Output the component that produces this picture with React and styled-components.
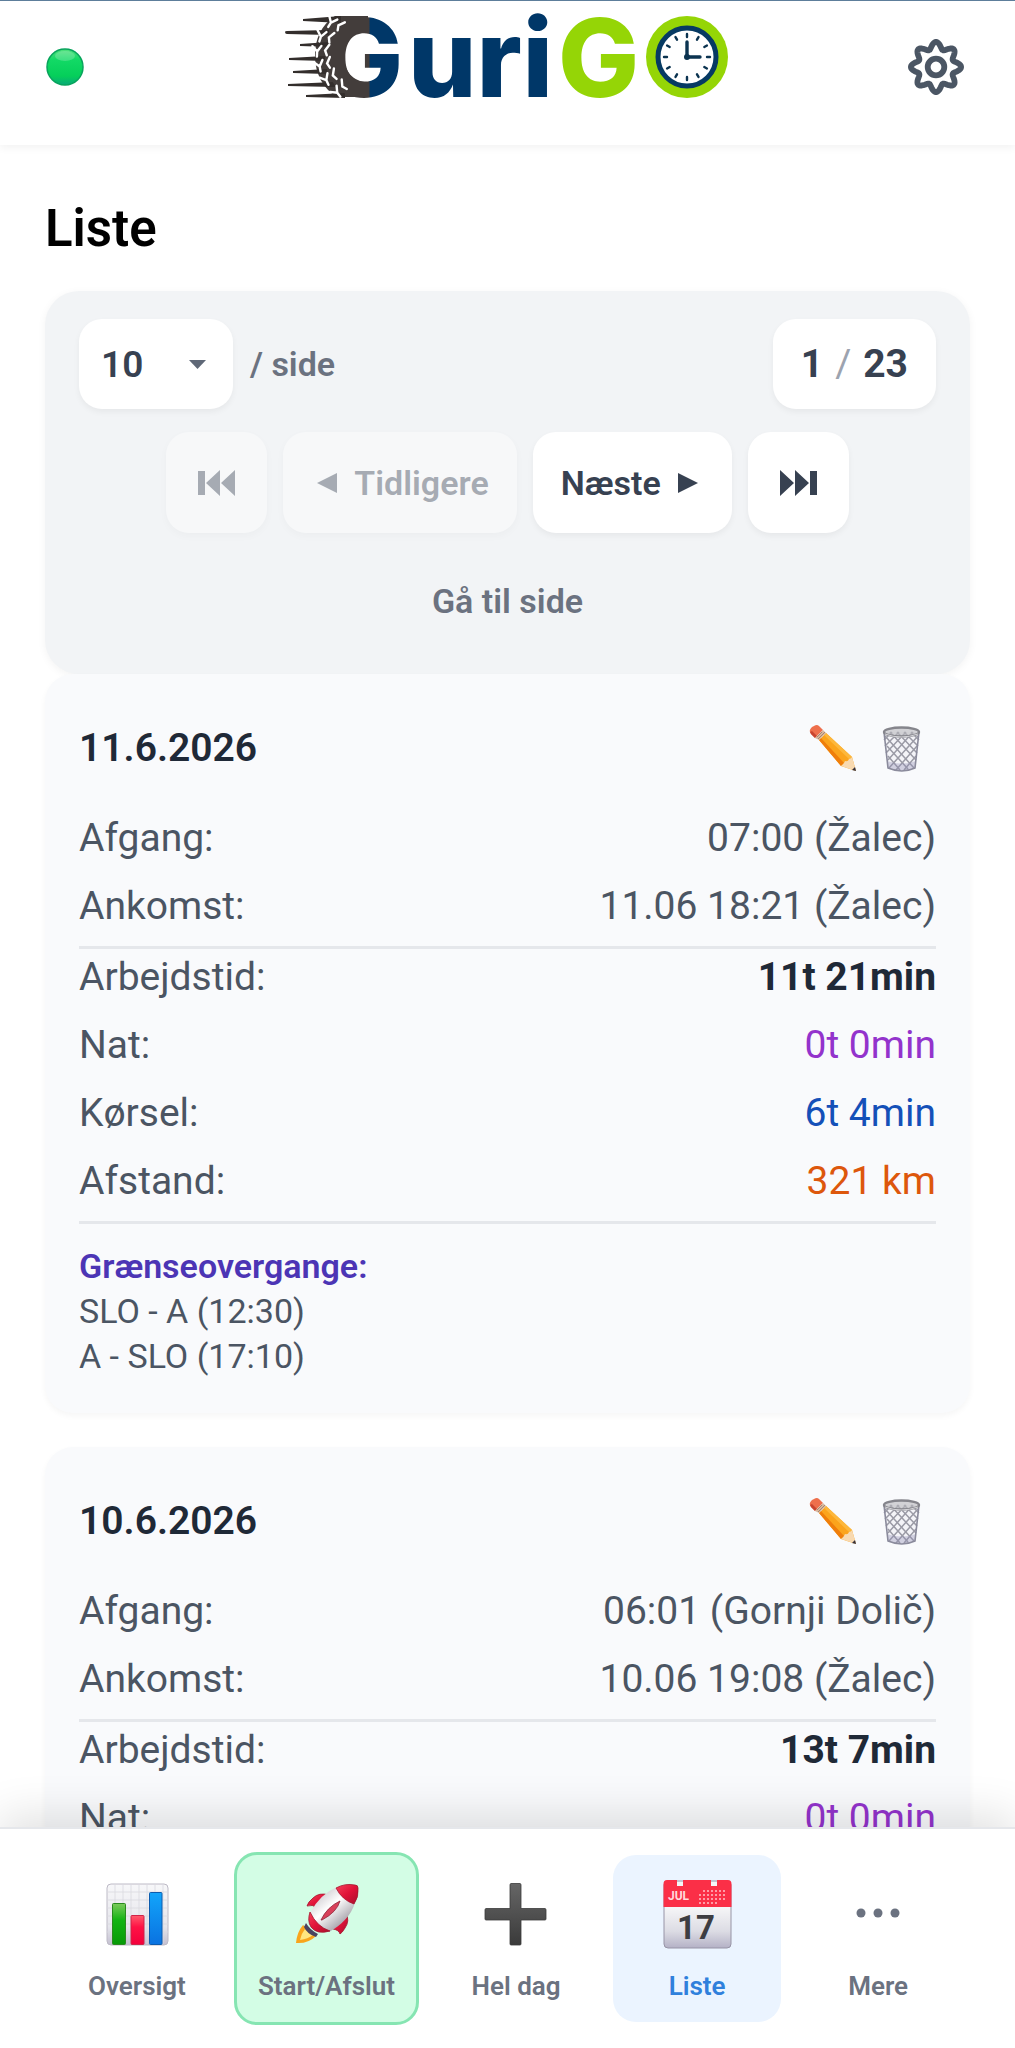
import React, { useState } from 'react';
import styled, { createGlobalStyle, css } from 'styled-components';

const GlobalStyle = createGlobalStyle`
  *, *::before, *::after {
    box-sizing: border-box;
  }

  body {
    margin: 0;
    background: #ffffff;
    font-family: Roboto, 'Liberation Sans', sans-serif;
  }

  button, select {
    font-family: inherit;
    border: none;
    margin: 0;
    padding: 0;
    background: none;
  }
`;

const Screen = styled.div`
  display: flex;
  flex-direction: column;
  height: 100vh;
  overflow: hidden;
  border-top: 1px solid #5d7e9b;
`;

const Header = styled.header`
  position: relative;
  z-index: 1;
  flex: none;
  display: grid;
  grid-template-columns: 1fr auto 1fr;
  align-items: center;
  padding: 12px 45px 34px;
  background: #ffffff;
  box-shadow: 0 3px 8px rgba(0, 0, 0, 0.05);
`;

const HeaderSide = styled.div`
  display: flex;
  align-items: center;
  justify-content: ${({ $end }) => ($end ? 'flex-end' : 'flex-start')};
  padding-top: 10px;
`;

const LogoSvg = styled.svg`
  display: block;
  overflow: visible;
`;

const IconButton = styled.button`
  display: flex;
  align-items: center;
  justify-content: center;
  width: ${({ $width }) => $width}px;
  height: ${({ $height }) => $height}px;
  cursor: pointer;
`;

const Main = styled.main`
  flex: 1;
  min-height: 0;
  overflow-y: auto;
  scrollbar-width: none;
  padding: 50px 45px 0;
`;

const Title = styled.h1`
  margin: 0 0 28px;
  font-size: 51px;
  line-height: 68px;
  font-weight: 600;
  color: #000000;
`;

const Pager = styled.section`
  display: flex;
  flex-direction: column;
  gap: 23px;
  padding: 28px 34px;
  border-radius: 34px;
  background: #f2f4f6;
  box-shadow: 0 2px 8px rgba(0, 0, 0, 0.05);
`;

const PagerTop = styled.div`
  display: flex;
  align-items: center;
  justify-content: space-between;
`;

const PageSize = styled.label`
  display: flex;
  align-items: center;
  gap: 17px;
  font-size: 34px;
  font-weight: 600;
  color: #6b7280;
`;

const whiteBox = css`
  border-radius: 23px;
  background: #ffffff;
  box-shadow: 0 3px 6px rgba(0, 0, 0, 0.05);
`;

const SelectBox = styled.span`
  display: grid;
  align-items: center;
  width: 154px;
  height: 90px;
  ${whiteBox}

  > * {
    grid-area: 1 / 1;
  }

  svg {
    justify-self: end;
    margin-right: 27px;
    pointer-events: none;
  }
`;

const Select = styled.select`
  appearance: none;
  width: 100%;
  height: 100%;
  padding: 0 22px;
  font-size: 37px;
  font-weight: 600;
  color: #374151;
`;

const PageCount = styled.div`
  display: flex;
  align-items: center;
  gap: 12px;
  height: 90px;
  padding: 0 28px;
  font-size: 39px;
  font-weight: 700;
  color: #374151;
  ${whiteBox}
`;

const Slash = styled.span`
  font-weight: 400;
  color: #9ca3af;
`;

const PagerButtons = styled.div`
  display: flex;
  justify-content: center;
  gap: 16px;
`;

const PagerButton = styled.button`
  display: flex;
  align-items: center;
  justify-content: center;
  gap: 11px;
  min-width: 101px;
  height: 101px;
  padding: 0 28px;
  font-size: 34px;
  font-weight: 600;
  color: #374151;
  cursor: pointer;
  ${whiteBox}

  &:disabled {
    opacity: 0.4;
    cursor: default;
  }
`;

const GoToPage = styled.button`
  height: 90px;
  font-size: 34px;
  font-weight: 600;
  color: #6b7280;
  cursor: pointer;
`;

const Cards = styled.div`
  display: flex;
  flex-direction: column;
  gap: 34px;
`;

const Card = styled.article`
  padding: 34px;
  border-radius: 28px;
  background: #f9fafc;
  box-shadow: 0 3px 6px rgba(0, 0, 0, 0.04);
`;

const CardHead = styled.div`
  display: flex;
  align-items: center;
  justify-content: space-between;
  height: 80px;
  margin-bottom: 22px;
`;

const CardDate = styled.h2`
  margin: 0;
  font-size: 39px;
  font-weight: 600;
  color: #1f2937;
`;

const CardActions = styled.div`
  display: flex;
`;

const Rows = styled.dl`
  display: flex;
  flex-direction: column;
  gap: 12px;
  margin: 0;
`;

const Row = styled.div`
  display: flex;
  justify-content: space-between;
  font-size: 39px;
  line-height: 56px;
  color: #4b5563;
  border-top: ${({ $line }) => ($line ? '3px solid #e5e7eb' : 'none')};
`;

const Value = styled.dd`
  margin: 0;
  font-weight: ${({ $strong }) => ($strong ? 700 : 400)};
  color: ${({ $color }) => $color || 'inherit'};
`;

const Crossings = styled.div`
  margin-top: 12px;
  padding-top: 20px;
  border-top: 3px solid #e5e7eb;
  font-size: 34px;
  line-height: 45px;
  color: #4b5563;
`;

const CrossingsTitle = styled.div`
  font-weight: 600;
  color: #4c35b5;
`;

const BottomNav = styled.nav`
  position: relative;
  z-index: 1;
  flex: none;
  display: flex;
  align-items: center;
  justify-content: center;
  gap: 13px;
  padding: 23px 0;
  background: #ffffff;
  border-top: 2px solid #e5e7eb;
  box-shadow: 0 -11px 42px rgba(0, 0, 0, 0.12);
`;

const NavItem = styled.a`
  display: flex;
  flex-direction: column;
  align-items: center;
  gap: 11px;
  min-width: 168px;
  padding: 17px 21px;
  border-radius: 23px;
  font-size: 26px;
  line-height: 38px;
  font-weight: 600;
  color: #6b7280;
  text-decoration: none;

  ${({ $highlight }) =>
    $highlight &&
    css`
      border: 3px solid #86e5b2;
      background: #d3fde5;
    `}

  ${({ $active }) =>
    $active &&
    css`
      background: #ebf4ff;
      color: #2f80dc;
    `}
`;

const NavIcon = styled.span`
  display: flex;
  align-items: center;
  height: 84px;
`;

const tread = [
  [56, 20], [46, 33], [42, 47], [44, 61], [50, 74], [60, 86],
];

const Logo = () => (
  <LogoSvg width="446" height="98" viewBox="0 0 446 98" role="img" aria-label="GuriGO">
    <defs>
      <linearGradient id="tyre" gradientUnits="userSpaceOnUse" x1="84" y1="0" x2="85" y2="0">
        <stop offset="0" stopColor="#433d3b" />
        <stop offset="1" stopColor="#003768" />
      </linearGradient>
    </defs>
    <path
      d="M83 3 H50 C36 12 30 26 30 43 C30 60 38 76 52 84 H83 V69 C68 69 59 58 59 43 C59 29 68 18 83 18 Z"
      fill="#433d3b"
    />
    <g fill="#332e2c">
      <path d="M18 6 L56 3 V10 L18 8 Z" />
      <path d="M0 19 Q0 18 2 18 L44 17 V22 L2 21 Q0 21 0 19 Z" />
      <path d="M15 31 L44 29 V34 L15 33 Z" />
      <path d="M4 45 L40 43 V48 L4 47 Z" />
      <path d="M8 58 L42 56 V61 L8 60 Z" />
      <path d="M3 71 L50 69 V74 L3 73 Z" />
      <path d="M21 82 L60 80 V85 L21 84 Z" />
    </g>
    <g fontFamily="Inter, sans-serif" fontWeight="800" fontSize="108">
      <text x="37" y="84" fill="url(#tyre)">G</text>
      <text x="123" y="84" fill="#003768">uri</text>
      <text x="273" y="84" fill="#95d506">G</text>
    </g>
    <g stroke="#ffffff" strokeWidth="2.4" strokeLinecap="round" fill="none">
      {tread.map(([x, y], i) => (
        <path
          key={y}
          transform={`translate(${x - 6} ${y - 10}) rotate(${20 - i * 14})`}
          d="M-8 -5 L-4 1 L-5 6 M-4 1 L1 -4 M9 -4 L4 1 L5 6"
        />
      ))}
    </g>
    <circle cx="402" cy="44" r="41" fill="#95d506" />
    <circle cx="402" cy="44" r="29" fill="#ffffff" stroke="#063a63" strokeWidth="5" />
    <g stroke="#0b3350" strokeLinecap="round">
      {Array.from({ length: 12 }, (_, i) => (
        <path key={i} d="M402 21 V24" strokeWidth="2.4" transform={`rotate(${i * 30} 402 44)`} />
      ))}
      <path d="M402 29 V44 H415" fill="none" strokeWidth="3.4" />
    </g>
    <circle cx="402" cy="44" r="3" fill="#0b3350" />
  </LogoSvg>
);

const StatusDot = () => (
  <svg width="40" height="40" viewBox="0 0 40 40" role="img" aria-label="Online">
    <defs>
      <linearGradient id="dot" x1="0" y1="0" x2="0" y2="1">
        <stop offset="0" stopColor="#4fe07c" />
        <stop offset="0.3" stopColor="#12d965" />
        <stop offset="0.75" stopColor="#05cf5a" />
        <stop offset="1" stopColor="#08a878" />
      </linearGradient>
    </defs>
    <circle cx="20" cy="20" r="18" fill="url(#dot)" stroke="#08a35c" strokeWidth="1.5" />
    <ellipse cx="20" cy="9" rx="10" ry="5" fill="#ffffff" opacity="0.2" />
  </svg>
);

// eight-lobed outline, sampled from a cosine around the circle
const gearPath = `M${Array.from({ length: 144 }, (_, i) => {
  const a = (i / 144) * Math.PI * 2;
  const r = 21.6 + 3.5 * Math.cos(8 * a);
  return `${(29 + r * Math.sin(a)).toFixed(2)} ${(29 - r * Math.cos(a)).toFixed(2)}`;
}).join('L')}Z`;

const GearIcon = () => (
  <svg width="58" height="58" viewBox="0 0 58 58" fill="none" stroke="#4b5664" strokeWidth="5.8" strokeLinejoin="round">
    <path d={gearPath} />
    <circle cx="29" cy="29" r="8.3" />
  </svg>
);

const CaretIcon = () => (
  <svg width="17" height="9" viewBox="0 0 17 9">
    <path d="M0 0 H17 L8.5 9 Z" fill="#5f6877" />
  </svg>
);

const FirstIcon = () => (
  <svg width="37" height="26" viewBox="0 0 37 26" fill="currentColor">
    <path d="M0 1 H7 V25 H0 Z M22 0 V26 L8 13 Z M37 0 V26 L23 13 Z" />
  </svg>
);

const LastIcon = () => (
  <svg width="37" height="26" viewBox="0 0 37 26" fill="currentColor">
    <path d="M30 1 H37 V25 H30 Z M0 0 V26 L14 13 Z M15 0 V26 L29 13 Z" />
  </svg>
);

const PrevIcon = () => (
  <svg width="32" height="20" viewBox="0 0 32 20" fill="currentColor">
    <path d="M26 0 V20 L6 10 Z" />
  </svg>
);

const NextIcon = () => (
  <svg width="32" height="20" viewBox="0 0 32 20" fill="currentColor">
    <path d="M6 0 V20 L26 10 Z" />
  </svg>
);

const PencilIcon = () => (
  <svg width="52" height="52" viewBox="0 0 52 52">
    <path d="M12 18 L19 11 L45 35 L49 49 L34 44 Z" fill="#fba41c" />
    <path d="M12 18 L14 16 L37 41 L34 44 Z" fill="#ef7e0b" />
    <path d="M17 13 L19 11 L45 35 L43 38 Z" fill="#fdb73b" />
    <path d="M34 44 Q37 42 38 39 Q41 40 42 37 Q44 37 45 35 L49 49 Z" fill="#f8d9b0" />
    <path d="M45 48 L48 45 L49 49 Z" fill="#35303a" />
    <path d="M3 10 Q2 8 5 5 L7 4 Q10 2 12 4 L16 8 L8 16 L4 12 Z" fill="#ee6f4c" />
    <path d="M3 10 L5 9 L10 14 L8 16 L4 12 Z" fill="#c9442f" />
    <path d="M8 16 L16 8 L19 11 L12 18 Z" fill="#d8b79c" />
    <path d="M10 15 L15 10 M11 17 L18 10" stroke="#a68672" strokeWidth="1" />
  </svg>
);

const TrashIcon = () => (
  <svg width="52" height="52" viewBox="0 0 52 52" fill="none">
    <path d="M8 10 L12 46 Q26 52 39 46 L43 10 Z" fill="#f4f4f8" />
    <g stroke="#9b9ba6" strokeWidth="1.5">
      <path d="M9 14 L38 46 M11 24 L32 47 M12 34 L24 48 M14 10 L40 38 M21 10 L41 31 M28 10 L42 24 M35 10 L43 18" />
      <path d="M42 14 L13 46 M41 24 L20 48 M40 34 L28 48 M37 10 L12 38 M30 10 L10 31 M23 10 L9 24 M16 10 L8 18" />
    </g>
    <path d="M11 39 L12 46 Q26 52 39 46 L40 39 Q26 44 11 39 Z" fill="#8e8cb4" opacity="0.35" />
    <path d="M8 10 L12 46 Q26 52 39 46 L43 10" stroke="#8b8b9c" strokeWidth="1.6" />
    <ellipse cx="25.5" cy="10" rx="17.5" ry="4.5" fill="#b7b7bc" opacity="0.6" />
    <ellipse cx="25.5" cy="10" rx="17.5" ry="4.5" stroke="#85858c" strokeWidth="2.4" />
    <path d="M9 12 Q25 18 42 12" stroke="#d6d6da" strokeWidth="1" />
  </svg>
);

const ChartIcon = () => (
  <svg width="72" height="72" viewBox="0 0 72 72">
    <defs>
      <linearGradient id="paper" x1="0" y1="0" x2="0" y2="1">
        <stop offset="0" stopColor="#f7f7f9" />
        <stop offset="0.7" stopColor="#e6e6ec" />
        <stop offset="1" stopColor="#c3bfd0" />
      </linearGradient>
      <linearGradient id="green" x1="0" y1="0" x2="0" y2="1">
        <stop offset="0" stopColor="#7ccb5c" />
        <stop offset="0.4" stopColor="#14b414" />
        <stop offset="1" stopColor="#079a07" />
      </linearGradient>
      <linearGradient id="red" x1="0" y1="0" x2="0" y2="1">
        <stop offset="0" stopColor="#ff5a6c" />
        <stop offset="0.4" stopColor="#ff1245" />
        <stop offset="1" stopColor="#f3003c" />
      </linearGradient>
      <linearGradient id="blue" x1="0" y1="0" x2="0" y2="1">
        <stop offset="0" stopColor="#12a5fb" />
        <stop offset="1" stopColor="#0a72e0" />
      </linearGradient>
    </defs>
    <rect x="6" y="6" width="61" height="61" rx="4" fill="url(#paper)" stroke="#bdbac6" />
    <path
      d="M14 6V66M22 6V66M30 6V66M38 6V66M46 6V66M54 6V66M62 6V66M6 14H67M6 22H67M6 30H67M6 38H67M6 46H67M6 54H67"
      stroke="#d9d9e0"
      strokeWidth="0.8"
    />
    <rect x="11.5" y="25.5" width="13" height="41" rx="1" fill="url(#green)" stroke="#2a8a1e" />
    <rect x="30" y="37.5" width="13" height="29" rx="1" fill="url(#red)" stroke="#cf2348" />
    <rect x="48.5" y="14.5" width="12.5" height="52" rx="1" fill="url(#blue)" stroke="#0c5cae" />
  </svg>
);

const RocketIcon = () => (
  <svg width="72" height="72" viewBox="0 0 72 72">
    <defs>
      <linearGradient id="hull" x1="0.25" y1="0.2" x2="0.75" y2="0.8">
        <stop offset="0" stopColor="#d9d6da" />
        <stop offset="0.4" stopColor="#ffffff" />
        <stop offset="1" stopColor="#a9a5ad" />
      </linearGradient>
      <linearGradient id="crimson" x1="0" y1="0" x2="1" y2="1">
        <stop offset="0" stopColor="#f5405a" />
        <stop offset="0.5" stopColor="#e01238" />
        <stop offset="1" stopColor="#a8102c" />
      </linearGradient>
    </defs>
    <path d="M12 47 Q6 54 5 65 Q17 66 25 58 Z" fill="#f9a51c" />
    <path d="M14 51 Q10 56 9 62 Q17 61 22 57 Z" fill="#ffe680" />
    <path d="M38 17 Q28 14 22 20 Q17 24 16 28 Q21 26 27 30 Z" fill="url(#crimson)" stroke="#a3142d" strokeWidth="0.8" />
    <path d="M55 35 Q59 43 54 50 Q51 55 49 56 Q48 52 42 51 Z" fill="url(#crimson)" stroke="#a3142d" strokeWidth="0.8" />
    <path d="M19 35 Q29 16 46 9 L64 25 Q58 43 38 54 Q26 53 19 35 Z" fill="url(#hull)" />
    <path d="M19 34 Q16 43 20 49 Q26 57 39 53 Q26 49 19 34 Z" fill="url(#crimson)" stroke="#a3142d" strokeWidth="0.8" />
    <path d="M45 10 Q54 5 64 7 Q67 7 67 10 Q68 19 63 26 Q51 22 45 10 Z" fill="url(#crimson)" stroke="#a3142d" strokeWidth="0.8" />
    <path d="M15 45 Q19 52 27 56 L25 59 Q16 56 13 49 Z" fill="#4b4560" />
    <path d="M30 42 Q36 29 49 23 Q46 34 31 42 Z" fill="#d9405a" stroke="#8d2438" strokeWidth="0.8" />
  </svg>
);

const PlusIcon = () => (
  <svg width="72" height="72" viewBox="0 0 72 72">
    <defs>
      <linearGradient id="plus" x1="0" y1="0" x2="0" y2="1">
        <stop offset="0" stopColor="#666666" />
        <stop offset="1" stopColor="#3a3a3a" />
      </linearGradient>
    </defs>
    <path
      d="M31 5.5 H40 Q41 5.5 41 7 V30.5 H65 Q66 30.5 66 32 V41 Q66 42 65 42 H41 V66 Q41 67 40 67 H31 Q30 67 30 66 V42 H6 Q5 42 5 41 V32 Q5 30.5 6 30.5 H30 V7 Q30 5.5 31 5.5 Z"
      fill="url(#plus)"
      stroke="#3b3b3b"
      strokeWidth="0.8"
    />
  </svg>
);

const CalendarIcon = () => (
  <svg width="72" height="72" viewBox="0 0 72 72">
    <defs>
      <linearGradient id="sheet" x1="0" y1="0" x2="0" y2="1">
        <stop offset="0.4" stopColor="#f5f5f7" />
        <stop offset="0.75" stopColor="#dcdce4" />
        <stop offset="1" stopColor="#b4b1c6" />
      </linearGradient>
    </defs>
    <rect x="3" y="3" width="67" height="67" rx="4" fill="url(#sheet)" stroke="#9794a6" />
    <path
      d="M2.5 29 V6 Q2.5 2 6 2 H16 V8 H22 V2 H50 V8 H56 V2 H67 Q70.5 2 70.5 6 V29 Z"
      fill="#fb2f47"
    />
    <text x="7" y="22" fontFamily="Roboto, sans-serif" fontWeight="700" fontSize="12" fill="#ffd9dd">JUL</text>
    <g stroke="#ff9ba6" strokeWidth="2" strokeDasharray="2 2">
      <path d="M42 13 H66 M38 17 H66 M38 21 H66 M38 25 H58" />
    </g>
    <text x="35" y="61" textAnchor="middle" fontFamily="Roboto, sans-serif" fontWeight="700" fontSize="33" fill="#3d3d42">17</text>
  </svg>
);

const DotsIcon = () => (
  <svg width="72" height="72" viewBox="0 0 72 72" fill="#6b7280">
    <circle cx="19" cy="35" r="4.5" />
    <circle cx="36" cy="35" r="4.5" />
    <circle cx="53" cy="35" r="4.5" />
  </svg>
);

const trips = [
  {
    date: '11.6.2026',
    rows: [
      { label: 'Afgang:', value: '07:00 (Žalec)' },
      { label: 'Ankomst:', value: '11.06 18:21 (Žalec)' },
      { label: 'Arbejdstid:', value: '11t 21min', color: '#1f2937', strong: true, line: true },
      { label: 'Nat:', value: '0t 0min', color: '#9333cc' },
      { label: 'Kørsel:', value: '6t 4min', color: '#1450b8' },
      { label: 'Afstand:', value: '321 km', color: '#dd570c' },
    ],
    crossings: ['SLO - A (12:30)', 'A - SLO (17:10)'],
  },
  {
    date: '10.6.2026',
    rows: [
      { label: 'Afgang:', value: '06:01 (Gornji Dolič)' },
      { label: 'Ankomst:', value: '10.06 19:08 (Žalec)' },
      { label: 'Arbejdstid:', value: '13t 7min', color: '#1f2937', strong: true, line: true },
      { label: 'Nat:', value: '0t 0min', color: '#9333cc' },
    ],
    crossings: [],
  },
];

const navItems = [
  { label: 'Oversigt', icon: ChartIcon },
  { label: 'Start/Afslut', icon: RocketIcon, highlight: true },
  { label: 'Hel dag', icon: PlusIcon },
  { label: 'Liste', icon: CalendarIcon, active: true },
  { label: 'Mere', icon: DotsIcon },
];

const TripCard = ({ trip }) => (
  <Card>
    <CardHead>
      <CardDate>{trip.date}</CardDate>
      <CardActions>
        <IconButton $width={69} $height={80} aria-label="Rediger">
          <PencilIcon />
        </IconButton>
        <IconButton $width={69} $height={80} aria-label="Slet">
          <TrashIcon />
        </IconButton>
      </CardActions>
    </CardHead>
    <Rows>
      {trip.rows.map((row) => (
        <Row key={row.label} $line={row.line}>
          <dt>{row.label}</dt>
          <Value $color={row.color} $strong={row.strong}>{row.value}</Value>
        </Row>
      ))}
    </Rows>
    {trip.crossings.length > 0 && (
      <Crossings>
        <CrossingsTitle>Grænseovergange:</CrossingsTitle>
        {trip.crossings.map((crossing) => (
          <div key={crossing}>{crossing}</div>
        ))}
      </Crossings>
    )}
  </Card>
);

const App = () => {
  const [page, setPage] = useState(1);
  const [pageSize, setPageSize] = useState('10');
  const pages = 23;

  return (
    <Screen>
      <GlobalStyle />
      <Header>
        <HeaderSide>
          <StatusDot />
        </HeaderSide>
        <Logo />
        <HeaderSide $end>
          <IconButton $width={68} $height={68} aria-label="Indstillinger">
            <GearIcon />
          </IconButton>
        </HeaderSide>
      </Header>

      <Main>
        <Title>Liste</Title>
        <Pager>
          <PagerTop>
            <PageSize>
              <SelectBox>
                <Select value={pageSize} onChange={(e) => setPageSize(e.target.value)}>
                  <option value="10">10</option>
                  <option value="25">25</option>
                  <option value="50">50</option>
                </Select>
                <CaretIcon />
              </SelectBox>
              / side
            </PageSize>
            <PageCount>
              {page} <Slash>/</Slash> {pages}
            </PageCount>
          </PagerTop>
          <PagerButtons>
            <PagerButton disabled={page === 1} onClick={() => setPage(1)} aria-label="Første side">
              <FirstIcon />
            </PagerButton>
            <PagerButton disabled={page === 1} onClick={() => setPage(page - 1)}>
              <PrevIcon />
              Tidligere
            </PagerButton>
            <PagerButton disabled={page === pages} onClick={() => setPage(page + 1)}>
              Næste
              <NextIcon />
            </PagerButton>
            <PagerButton disabled={page === pages} onClick={() => setPage(pages)} aria-label="Sidste side">
              <LastIcon />
            </PagerButton>
          </PagerButtons>
          <GoToPage>Gå til side</GoToPage>
        </Pager>

        <Cards>
          {trips.map((trip) => (
            <TripCard key={trip.date} trip={trip} />
          ))}
        </Cards>
      </Main>

      <BottomNav>
        {navItems.map(({ label, icon: Icon, highlight, active }) => (
          <NavItem key={label} href="#" $highlight={highlight} $active={active}>
            <NavIcon>
              <Icon />
            </NavIcon>
            {label}
          </NavItem>
        ))}
      </BottomNav>
    </Screen>
  );
};

export default App;
